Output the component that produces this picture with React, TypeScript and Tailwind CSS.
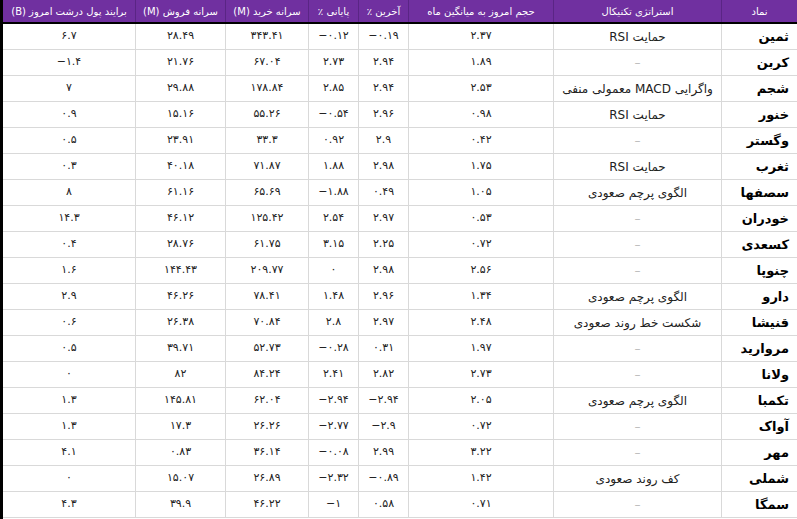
const rows: string[][] = [
  ["ثمین", "حمایت RSI", "۲.۳۷", "−۰.۱۹", "−۰.۱۲", "۳۴۳.۴۱", "۲۸.۴۹", "۶.۷"],
  ["کربن", "", "۱.۸۹", "۲.۹۴", "۲.۷۳", "۶۷.۰۴", "۲۱.۷۶", "−۱.۴"],
  ["شجم", "واگرایی MACD معمولی منفی", "۲.۵۳", "۲.۹۴", "۲.۸۵", "۱۷۸.۸۴", "۲۹.۸۸", "۷"],
  ["خنور", "حمایت RSI", "۰.۹۸", "۲.۹۶", "−۰.۵۴", "۵۵.۲۶", "۱۵.۱۶", "۰.۹"],
  ["وگستر", "", "۰.۴۲", "۲.۹", "۰.۹۲", "۳۳.۳", "۲۳.۹۱", "۰.۵"],
  ["ثغرب", "حمایت RSI", "۱.۷۵", "۲.۹۸", "۱.۸۸", "۷۱.۸۷", "۴۰.۱۸", "۰.۳"],
  ["سصفها", "الگوی پرچم صعودی", "۱.۰۵", "۰.۴۹", "−۱.۸۸", "۶۵.۶۹", "۶۱.۱۶", "۸"],
  ["خودران", "", "۰.۵۳", "۲.۹۷", "۲.۵۴", "۱۲۵.۴۲", "۴۶.۱۲", "۱۴.۳"],
  ["کسعدی", "", "۰.۷۲", "۲.۲۵", "۳.۱۵", "۶۱.۷۵", "۲۸.۷۶", "۰.۴"],
  ["چنوپا", "", "۲.۵۶", "۲.۹۸", "۰", "۲۰۹.۷۷", "۱۴۴.۴۳", "۱.۶"],
  ["دارو", "الگوی پرچم صعودی", "۱.۳۴", "۲.۹۶", "۱.۴۸", "۷۸.۴۱", "۴۶.۲۶", "۲.۹"],
  ["قنیشا", "شکست خط روند صعودی", "۲.۴۸", "۲.۹۷", "۲.۸", "۷۰.۸۴", "۲۶.۳۸", "۰.۶"],
  ["مروارید", "", "۱.۹۷", "۰.۳۱", "−۰.۲۸", "۵۲.۷۳", "۳۹.۷۱", "۰.۵"],
  ["ولانا", "", "۲.۷۳", "۲.۸۲", "۲.۴۱", "۸۴.۲۴", "۸۲", "۰"],
  ["تکمبا", "الگوی پرچم صعودی", "۲.۰۵", "−۲.۹۴", "−۲.۹۴", "۶۲.۰۴", "۱۴۵.۸۱", "۱.۳"],
  ["آواک", "", "۰.۷۲", "−۲.۹", "−۲.۷۷", "۲۶.۲۶", "۱۷.۳", "۱.۳"],
  ["مهر", "", "۳.۲۲", "۲.۹۹", "−۰.۰۸", "۳۶.۱۴", "۰.۸۳", "۴.۱"],
  ["شملی", "کف روند صعودی", "۱.۴۲", "−۰.۸۹", "−۲.۳۲", "۲۶.۸۹", "۱۵.۰۷", "۰"],
  ["سمگا", "", "۰.۷۱", "۰.۵۸", "−۱", "۴۶.۲۲", "۳۹.۹", "۴.۳"],
];

const headers = [
  "نماد",
  "استراتژی تکنیکال",
  "حجم امروز به میانگین ماه",
  "آخرین ٪",
  "پایانی ٪",
  "سرانه خرید (M)",
  "سرانه فروش (M)",
  "برایند پول درشت امروز (B)",
];

const widths = ["w-[76px]", "w-[168px]", "w-[145px]", "w-[50px]", "w-[50px]", "w-[83px]", "w-[90px]", "flex-1"];

export default function App() {
  return (
    <div
      dir="rtl"
      className="w-[797px] h-[519px] overflow-hidden bg-white border-l-[3px] border-black text-[#222]"
      style={{ fontFamily: '"DejaVu Sans", sans-serif' }}
    >
      <div className="flex h-[24px] bg-[#7030a0] text-white text-[10px] border-b-[2px] border-black">
        {headers.map((h, i) => (
          <div
            key={i}
            className={`${widths[i]} flex items-center justify-center border-l border-[#5a2585] last:border-l-0`}
          >
            {h}
          </div>
        ))}
      </div>
      {rows.map((r, ri) => (
        <div key={ri} className="flex h-[26px] border-b border-[#d9d9d9]">
          {r.map((c, i) => (
            <div
              key={i}
              className={`${widths[i]} flex items-center border-l border-[#d9d9d9] last:border-l-0 ${
                i === 0 ? "justify-start pr-2 font-bold text-[13px] text-black" : "justify-center"
              } ${i === 1 ? "text-[12px] leading-[12px] text-center" : i === 0 ? "" : "text-[11px]"}`}
            >
              {i === 0 || i === 1 ? (
                c || <span className="text-[#bbb]">–</span>
              ) : (
                <span dir="ltr">{c}</span>
              )}
            </div>
          ))}
        </div>
      ))}
    </div>
  );
}
